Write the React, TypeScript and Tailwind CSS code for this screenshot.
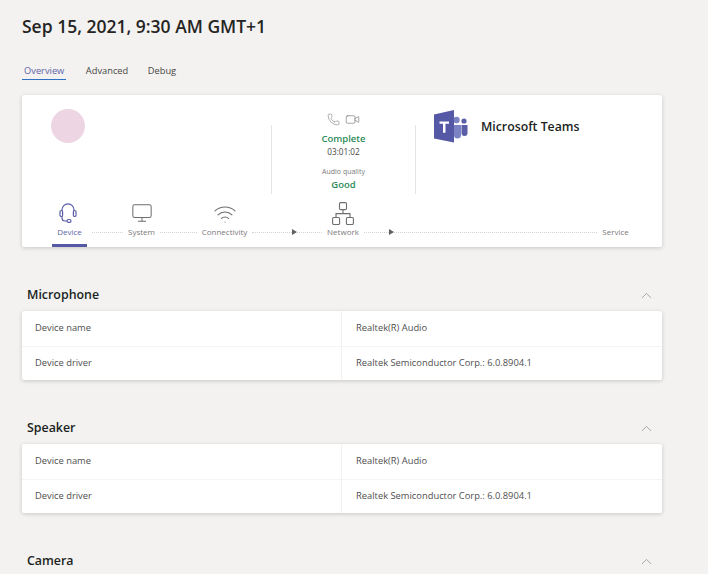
import { ChevronUp, Monitor, Phone, Video, Wifi } from "lucide-react"

const deviceRows = [
  { label: "Device name", value: "Realtek(R) Audio" },
  { label: "Device driver", value: "Realtek Semiconductor Corp.: 6.0.8904.1" },
]

function TeamsLogo() {
  return (
    <svg width="34" height="33" viewBox="0 0 34 33" className="shrink-0">
      <circle cx="22.5" cy="10" r="3.2" fill="#7b83c4" />
      <circle cx="30" cy="11" r="2.6" fill="#5b5fa8" />
      <path d="M20 15h7v10a3.5 3.5 0 0 1-7 0z" fill="#7b83c4" />
      <path d="M27.5 15h6v8a3 3 0 0 1-6 0z" fill="#5b5fa8" />
      <path d="M0 4.5 20 0v32.5L0 28.500z" fill="#5558a5" />
      <path d="M5.500 11.500h9.500v2.300h-3.500v9h-2.500v-9H5.500z" fill="#fff" />
    </svg>
  )
}

function HeadsetIcon() {
  return (
    <svg width="18" height="20" viewBox="0 0 18 20" fill="none" stroke="#5b5fa8" strokeWidth="1.2" className="mr-[3px] shrink-0">
      <path d="M3 8V6.800a6 6 0 0 1 12 0V8" />
      <rect x="1" y="7.500" width="2.600" height="6" rx="1.300" />
      <rect x="14.400" y="7.500" width="2.600" height="6" rx="1.300" />
      <path d="M3 13.500v1.500a3 3 0 0 0 3 3h2" />
      <rect x="8" y="16.500" width="4" height="2.800" rx="1.400" />
    </svg>
  )
}

function NetworkIcon() {
  return (
    <svg width="22" height="23" viewBox="0 0 22 23" fill="none" stroke="#6e6e6e" strokeWidth="1.1" className="-mb-[2px] shrink-0">
      <rect x="7.500" y="0.600" width="7" height="7" rx="1.200" />
      <rect x="0.600" y="15.500" width="7" height="7" rx="1.200" />
      <rect x="14.400" y="15.500" width="7" height="7" rx="1.200" />
      <path d="M11 7.600v4M4 15.500v-3.900h14v3.900" />
    </svg>
  )
}

function Dots({ width, arrowAt }: { width: number; arrowAt?: number }) {
  return (
    <div className="relative mb-[14px]" style={{ width }}>
      <div className="mx-[5px] border-t border-dotted border-[#d6d4d2]" />
      {arrowAt !== undefined && (
        <span
          className="absolute top-[-3px] h-0 w-0 border-y-[3px] border-l-[5px] border-y-transparent border-l-[#616161]"
          style={{ left: arrowAt }}
        />
      )}
    </div>
  )
}

function Step({
  label,
  width,
  active,
  icon,
}: {
  label: string
  width: number
  active?: boolean
  icon?: React.ReactNode
}) {
  return (
    <div className="flex flex-col items-center" style={{ width }}>
      {icon}
      <span className={`mt-[3px] text-[8px] leading-[12px] whitespace-nowrap ${active ? "text-[#6264a7]" : "text-[#7a7a7a]"}`}>
        {label}
      </span>
      <div className={`mt-[6px] h-[3px] w-full ${active ? "bg-[#5558a5]" : ""}`} />
    </div>
  )
}

function Section({ title, rows }: { title: string; rows?: typeof deviceRows }) {
  return (
    <section className="mb-[37px]">
      <div className="flex h-[22px] items-center justify-between pl-[5px] pr-[7px]">
        <h2 className="text-[12.400px] font-semibold text-[#201f1e]">{title}</h2>
        <ChevronUp className="h-[17px] w-[17px] text-[#8a8886]" strokeWidth={1} />
      </div>
      {rows && (
        <div className="mt-[5px] rounded-[2px] bg-white shadow-[0_1px_4px_rgba(0,0,0,0.18)]">
          {rows.map((row, index) => (
            <div key={row.label} className={`flex h-[34.500px] items-center text-[9.350px] text-[#4f4f4f] ${index ? "border-t border-[#f5f4f3]" : ""}`}>
              <div className="flex h-full w-[320px] items-center border-r border-[#f3f2f1] pl-[13px]">{row.label}</div>
              <div className="pl-[14px]">{row.value}</div>
            </div>
          ))}
        </div>
      )}
    </section>
  )
}

export default function App() {
  return (
    <div className="h-[574px] w-[708px] overflow-hidden bg-[#f3f2f1] pl-[22px] font-['Open_Sans',sans-serif]">
      <div className="w-[640px]">
        <h1 className="pt-[14px] text-[17.500px] leading-[24px] font-semibold text-[#252423]">Sep 15, 2021, 9:30 AM GMT+1</h1>

        <div className="mt-[26px] flex gap-[19.500px] text-[9.300px] leading-[14px] text-[#484644]">
          <div className="border-b-[1.500px] border-[#2f6fc4] px-[2px] pb-[1px] text-[#6264a7]">Overview</div>
          <div>Advanced</div>
          <div>Debug</div>
        </div>

        <div className="mt-[15px] h-[152px] rounded-[2px] bg-white shadow-[0_1px_4px_rgba(0,0,0,0.18)]">
          <div className="flex h-[99px]">
            <div className="w-[249px] pt-[14px] pl-[29px]">
              <div className="h-[34px] w-[34px] rounded-full bg-[#eed5e3]" />
            </div>
            <div className="mt-[30px] h-[69px] w-px bg-[#e6e5e4]" />
            <div className="flex w-[143px] flex-col items-center pt-[17px]">
              <div className="flex items-center gap-[5px] text-[#6e6e6e]">
                <Phone className="h-[13px] w-[13px]" strokeWidth={1} />
                <Video className="h-[15px] w-[15px]" strokeWidth={1} />
              </div>
              <div className="mt-[5px] text-[9.500px] leading-[14px] font-semibold text-[#2e8b57]">Complete</div>
              <div className="text-[8.200px] leading-[12px] text-[#484644]">03:01:02</div>
              <div className="mt-[8px] text-[7px] leading-[12px] text-[#7a7a7a]">Audio quality</div>
              <div className="text-[9.500px] leading-[14px] font-semibold text-[#2e8b57]">Good</div>
            </div>
            <div className="mt-[30px] h-[69px] w-px bg-[#e6e5e4]" />
            <div className="flex items-start gap-[13px] pt-[15px] pl-[18px]">
              <TeamsLogo />
              <div className="mt-[8px] text-[12.300px] leading-[18px] font-semibold text-[#201f1e]">Microsoft Teams</div>
            </div>
          </div>
          <div className="flex h-[53px] items-end pl-[30px]">
            <Step label="Device" width={35} active icon={<HeadsetIcon />} />
            <Dots width={41} />
            <Step label="System" width={27} icon={<Monitor className="-mb-[1px] h-[22px] w-[22px] text-[#6e6e6e]" strokeWidth={1.1} />} />
            <Dots width={47} />
            <Step label="Connectivity" width={45} icon={<Wifi className="-mb-[3px] h-[24px] w-[24px] text-[#6e6e6e]" strokeWidth={1.100} />} />
            <Dots width={80} arrowAt={45} />
            <Step label="Network" width={32} icon={<NetworkIcon />} />
            <Dots width={243} arrowAt={30} />
            <Step label="Service" width={27} />
          </div>
        </div>

        <div className="mt-[37px]">
          <Section title="Microphone" rows={deviceRows} />
          <Section title="Speaker" rows={deviceRows} />
          <Section title="Camera" />
        </div>
      </div>
    </div>
  )
}
